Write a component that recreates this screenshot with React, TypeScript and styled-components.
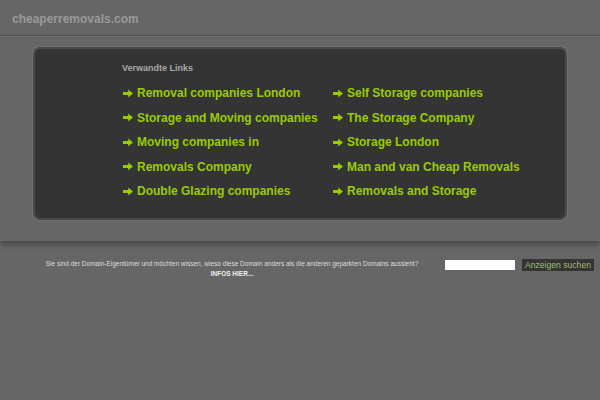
import styled, { createGlobalStyle } from 'styled-components'

const GlobalStyle = createGlobalStyle`
    html, body {
        margin: 0;
        padding: 0;
        background-color: #666;
        font-family: "Liberation Sans", Arial, sans-serif;
    }
`

const Header = styled.div`
    height: 36px;
    display: flex;
    align-items: center;
    padding: 2px 0 0 12px;
    box-sizing: border-box;
    border-bottom: 1px solid #5a5a5a;
`

const Title = styled.span`
    font-size: 12px;
    font-weight: 700;
    color: #999;
`

const Band = styled.div`
    padding: 10px 33px 21px 33px;
    box-shadow: 0 3px 6px rgba(0, 0, 0, 0.35);
    border-top: 1px solid #707070;
`

const Panel = styled.div`
    background-color: #343434;
    border: 2px solid #4a4a4a;
    border-radius: 7px;
    box-shadow: 0 0 1px 1px #707070;
    padding: 14px 0 19px 87px;
`

const Heading = styled.div`
    font-size: 9px;
    font-weight: 700;
    color: #a8a8a8;
    margin-bottom: 12px;
`

const LinkGrid = styled.div`
    display: grid;
    grid-template-columns: 210px 1fr;
    grid-auto-rows: 16px;
    row-gap: 8.6px;
`

const LinkItem = styled.a`
    display: flex;
    align-items: center;
    font-size: 12px;
    font-weight: 700;
    color: #9c0;
    text-decoration: none;
    line-height: 16px;
    white-space: nowrap;
`

const Arrow = styled.svg`
    width: 10px;
    height: 9px;
    margin: 0 4px 0 1px;
    flex: none;
`

const Footer = styled.div`
    display: flex;
    align-items: flex-start;
    padding-top: 18px;
`

const Notice = styled.div`
    width: 426px;
    padding-left: 19px;
    text-align: center;
    font-size: 6.5px;
    color: #ddd;
    line-height: 10px;
`

const Strong = styled.div`
    font-weight: 700;
    color: #eee;
`

const SearchBox = styled.input`
    width: 70px;
    height: 10px;
    margin: 1px 0 0 0;
    padding: 0;
    border: none;
    background: #fff;
`

const SearchButton = styled.button`
    margin: 0 0 0 7px;
    padding: 0 3px;
    height: 12px;
    border: none;
    background: #353535;
    color: #a3bd72;
    font-family: "Liberation Sans", Arial, sans-serif;
    font-size: 8.6px;
    line-height: 12px;
`

const links = [
    ['Removal companies London', 'Self Storage companies'],
    ['Storage and Moving companies', 'The Storage Company'],
    ['Moving companies in', 'Storage London'],
    ['Removals Company', 'Man and van Cheap Removals'],
    ['Double Glazing companies', 'Removals and Storage'],
]

const ArrowIcon = () => (
    <Arrow viewBox="0 0 10 9">
        <path d="M0 3.1 H5.2 V0.4 L10 4.5 L5.2 8.6 V5.9 H0 Z" fill="currentColor" />
    </Arrow>
)

const App = () => {
    return (
        <>
            <GlobalStyle />
            <Header>
                <Title>cheaperremovals.com</Title>
            </Header>
            <Band>
                <Panel>
                    <Heading>Verwandte Links</Heading>
                    <LinkGrid>
                        {links.flat().map(text => (
                            <LinkItem key={text} href="#">
                                <ArrowIcon />{text}
                            </LinkItem>
                        ))}
                    </LinkGrid>
                </Panel>
            </Band>
            <Footer>
                <Notice>
                    Sie sind der Domain-Eigentümer und möchten wissen, wieso diese Domain anders als die anderen geparkten Domains aussieht?
                    <Strong>INFOS HIER...</Strong>
                </Notice>
                <SearchBox type="text" />
                <SearchButton>Anzeigen suchen</SearchButton>
            </Footer>
        </>
    )
}

export default App
